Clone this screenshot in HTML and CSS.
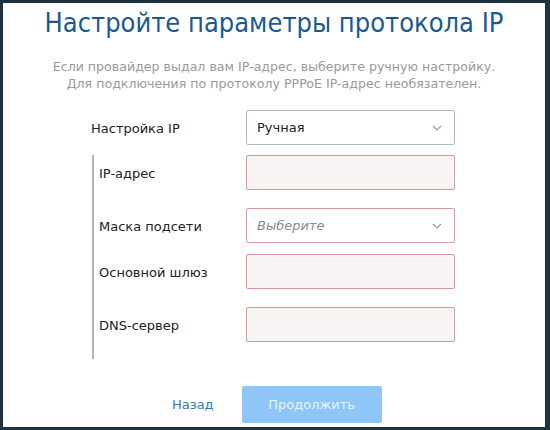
FILE: index.html
```html
<!DOCTYPE html>
<html lang="ru">
<head>
    <meta charset="UTF-8">
    <meta name="viewport" content="width=device-width, initial-scale=1.0">
    <title>Настройка протокола IP</title>
    <link rel="stylesheet" href="styles.css">
</head>
<body>

<div class="frame">
    <h1 class="title">Настройте параметры протокола IP</h1>
    <p class="hint">
        Если провайдер выдал вам IP-адрес, выберите ручную настройку.<br>
        Для подключения по протоколу PPPoE IP-адрес необязателен.
    </p>

    <div class="form">
        <div class="row">
            <label class="label">Настройка IP</label>
            <div class="select">
                <span>Ручная</span>
                <svg class="chevron" width="10" height="6" viewBox="0 0 10 6"><path d="M1 1l4 4 4-4" fill="none" stroke="#8aa0b0" stroke-width="1.2"/></svg>
            </div>
        </div>

        <!-- manual settings -->
        <div class="group">
            <div class="row">
                <label class="label">IP-адрес</label>
                <div class="input"></div>
            </div>
            <div class="row gap-l">
                <label class="label">Маска подсети</label>
                <div class="select error">
                    <span class="placeholder">Выберите</span>
                    <svg class="chevron" width="10" height="6" viewBox="0 0 10 6"><path d="M1 1l4 4 4-4" fill="none" stroke="#8aa0b0" stroke-width="1.2"/></svg>
                </div>
            </div>
            <div class="row gap-s">
                <label class="label">Основной шлюз</label>
                <div class="input"></div>
            </div>
            <div class="row gap-l">
                <label class="label">DNS-сервер</label>
                <div class="input"></div>
            </div>
        </div>
    </div>

    <div class="actions">
        <a class="back">Назад</a>
        <button class="next">Продолжить</button>
    </div>
</div>

</body>
</html>
```

FILE: styles.css
```css
body {
    margin: 0;
    font-family: "DejaVu Sans", Verdana, sans-serif;
}
.frame {
    width: 550px;
    height: 430px;
    box-sizing: border-box;
    border: 3px solid #1d3342;
    border-right-width: 5px;
    background-color: #fff;
}
.title {
    margin: 4px 0 0;
    text-align: center;
    font-family: "DejaVu Sans Condensed", "DejaVu Sans", sans-serif;
    font-size: 27px;
    font-weight: normal;
    line-height: 32px;
    color: #1b5a8f;
}
.hint {
    margin: 19px 0 0;
    text-align: center;
    font-size: 12.6px;
    line-height: 17px;
    color: #9a9a9a;
}
.form {
    margin: 18px 0 0 88px;
    width: 364px;
}
.row {
    display: flex;
    align-items: center;
    height: 35px;
}
.label {
    width: 155px;
    padding-top: 2px;
    font-size: 13px;
    color: #222;
}
.group {
    margin: 10px 0 0 1px;
    padding: 0 0 17px 5px;
    border-left: 2px solid #b4b4b4;
}
.group .label {
    width: 147px;
}
.gap-s {
    margin-top: 11px;
}
.gap-l {
    margin-top: 18px;
}
.select,
.input {
    width: 209px;
    height: 35px;
    box-sizing: border-box;
    border: 1px solid #a9bccb;
    border-radius: 2px;
    display: flex;
    align-items: center;
    justify-content: space-between;
    padding: 0 12px 0 10px;
    font-size: 13px;
    color: #222;
    background-color: #fff;
}
.input,
.select.error {
    border-color: #d79a9a;
}
.input {
    background-color: #f8f4f4;
}
.placeholder {
    font-style: italic;
    color: #8a8a8a;
}
.actions {
    display: flex;
    align-items: center;
    margin: 27px 0 0 169px;
}
.back {
    font-size: 13px;
    color: #2e7bb0;
    cursor: pointer;
}
.next {
    margin-left: 28px;
    width: 140px;
    height: 37px;
    border: none;
    border-radius: 2px;
    background-color: #8ec6f7;
    color: #e8f4ff;
    font-family: inherit;
    font-size: 13px;
}
```
